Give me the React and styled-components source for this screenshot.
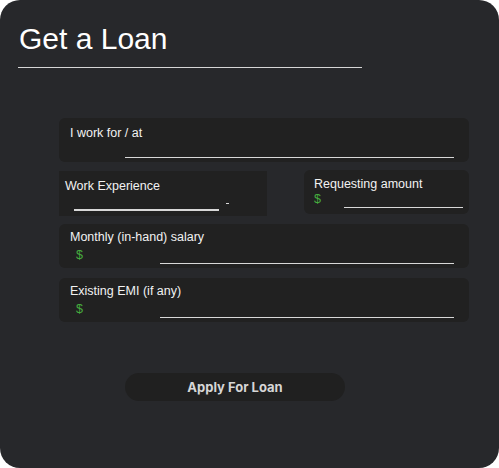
import React from 'react';
import styled, { createGlobalStyle } from 'styled-components';

const GlobalStyle = createGlobalStyle`
  body {
    margin: 0;
    background: #ffffff;
    font-family: "Liberation Sans", Arial, sans-serif;
  }
`;

// Carte principale
const Card = styled.div`
  width: 499px;
  height: 468px;
  box-sizing: border-box;
  background-color: #27282b;
  border-radius: 20px;
  padding: 22px 0 0 18px;
`;

const Header = styled.div`
  width: 344px;
  border-bottom: 1px solid #d6d6d6;
  padding: 0 0 11px 1px;
  box-sizing: border-box;
`;

const Title = styled.h1`
  margin: 0;
  font-size: 30px;
  font-weight: 400;
  color: #ffffff;
  line-height: 34px;
`;

const Form = styled.form`
  width: 410px;
  margin: 50px 0 0 41px;
  display: flex;
  flex-direction: column;
`;

const Field = styled.div`
  box-sizing: border-box;
  height: ${(p) => p.$height || 44}px;
  width: ${(p) => (p.$width ? `${p.$width}px` : '100%')};
  margin-top: ${(p) => p.$gap || 0}px;
  padding: ${(p) => p.$pad || '8px 15px 0 11px'};
  background-color: #212121;
  border-radius: ${(p) => (p.$square ? 0 : 6)}px;
  display: flex;
  flex-direction: column;
`;

const Row = styled.div`
  display: flex;
  justify-content: space-between;
  align-items: flex-start;
  margin-top: 8px;
`;

const Label = styled.label`
  font-size: 12.5px;
  line-height: 14px;
  color: #f2f2f2;
`;

const InputRow = styled.div`
  display: flex;
  align-items: flex-end;
  height: ${(p) => p.$height || 18}px;
`;

const Currency = styled.span`
  box-sizing: border-box;
  font-size: 12.5px;
  line-height: 14px;
  color: #46ad3f;
  width: ${(p) => p.$width}px;
  padding-left: ${(p) => p.$indent || 0}px;
  padding-bottom: ${(p) => p.$lift || 0}px;
  flex-shrink: 0;
`;

const Input = styled.input`
  flex: ${(p) => (p.$width ? 'none' : 1)};
  width: ${(p) => (p.$width ? `${p.$width}px` : 'auto')};
  min-width: 0;
  margin: 0 0 ${(p) => p.$bottom || 0}px ${(p) => p.$offset || 0}px;
  padding: 0;
  height: 16px;
  background: transparent;
  border: none;
  border-bottom: ${(p) => p.$thick || 1}px solid #d8d8d8;
  color: #ffffff;
  font-family: inherit;
  font-size: 12px;
  outline: none;
`;

const Dash = styled.span`
  width: 3px;
  height: 1px;
  background: #d8d8d8;
  margin: 0 0 7px 7px;
`;

const ApplyButton = styled.button`
  width: 220px;
  height: 28px;
  margin: 51px 0 0 107px;
  border: none;
  border-radius: 14px;
  background-color: #202020;
  color: #d6d6d6;
  font-family: Inter, "Liberation Sans", sans-serif;
  font-weight: 700;
  font-size: 13px;
  cursor: pointer;
`;

const App = () => {
  return (
    <>
      <GlobalStyle />
      <Card>
        <Header>
          <Title>Get a Loan</Title>
        </Header>

        <Form onSubmit={(e) => e.preventDefault()}>
          <Field>
            <Label>I work for / at</Label>
            <InputRow>
              <Input type="text" $offset={55} />
            </InputRow>
          </Field>

          <Row>
            <Field $width={208} $height={45} $gap={1} $square $pad="8px 0 0 6px">
              <Label>Work Experience</Label>
              <InputRow $height={18}>
                <Input type="text" $width={145} $offset={9} $thick={2} />
                <Dash />
              </InputRow>
            </Field>

            <Field $width={165} $pad="7px 6px 0 10px">
              <Label>Requesting amount</Label>
              <InputRow $height={17}>
                <Currency $width={30} $lift={2}>$</Currency>
                <Input type="text" />
              </InputRow>
            </Field>
          </Row>

          <Field $gap={8} $pad="6px 15px 0 11px">
            <Label>Monthly (in-hand) salary</Label>
            <InputRow $height={20}>
              <Currency $width={90} $indent={6} $lift={2}>$</Currency>
              <Input type="text" />
            </InputRow>
          </Field>

          <Field $gap={10} $pad="6px 15px 0 11px">
            <Label>Existing EMI (if any)</Label>
            <InputRow $height={20}>
              <Currency $width={90} $indent={6} $lift={2}>$</Currency>
              <Input type="text" />
            </InputRow>
          </Field>
        </Form>

        <ApplyButton type="button">Apply For Loan</ApplyButton>
      </Card>
    </>
  );
};

export default App;
